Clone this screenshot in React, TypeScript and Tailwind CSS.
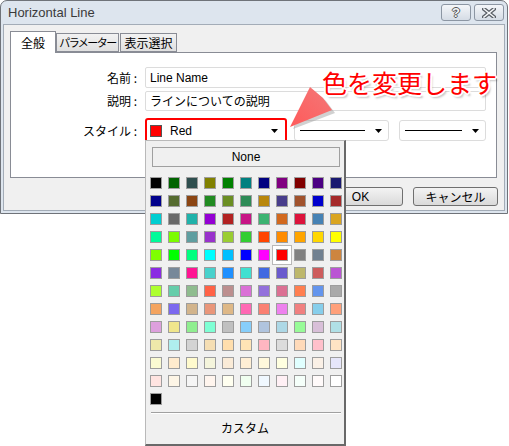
import React from "react";

const UI = "font-['Liberation_Sans','Noto_Sans_CJK_JP',sans-serif]";
const JP = "font-['Noto_Sans_CJK_JP','Liberation_Sans',sans-serif]";

// MT4 のウェブカラー (11 x 12)
const palette = [
  "#000000", "#006400", "#2f4f4f", "#808000", "#008000", "#008080", "#000080", "#800080", "#800000", "#4b0082", "#191970",
  "#00008b", "#556b2f", "#8b4513", "#228b22", "#6b8e23", "#2e8b57", "#b8860b", "#483d8b", "#a0522d", "#0000cd", "#a52a2a",
  "#00ced1", "#696969", "#20b2aa", "#9400d3", "#b22222", "#c71585", "#3cb371", "#d2691e", "#dc143c", "#4682b4", "#daa520",
  "#00fa9a", "#7cfc00", "#5f9ea0", "#9932cc", "#9acd32", "#32cd32", "#ff4500", "#ff8c00", "#ffa500", "#ffd700", "#ffff00",
  "#7fff00", "#00ff00", "#00ff7f", "#00ffff", "#00bfff", "#0000ff", "#ff00ff", "#ff0000", "#808080", "#708090", "#cd853f",
  "#8a2be2", "#778899", "#ff1493", "#48d1cc", "#1e90ff", "#40e0d0", "#4169e1", "#6a5acd", "#bdb76b", "#cd5c5c", "#ba55d3",
  "#adff2f", "#66cdaa", "#8fbc8f", "#ff6347", "#bc8f8f", "#da70d6", "#9370db", "#db7093", "#ff7f50", "#6495ed", "#a9a9a9",
  "#f4a460", "#7b68ee", "#d2b48c", "#e9967a", "#deb887", "#ff69b4", "#fa8072", "#ee82ee", "#f08080", "#87ceeb", "#ffa07a",
  "#dda0dd", "#f0e68c", "#90ee90", "#7fffd4", "#c0c0c0", "#87cefa", "#b0c4de", "#add8e6", "#98fb98", "#d8bfd8", "#b0e0e6",
  "#eee8aa", "#afeeee", "#d3d3d3", "#f5deb3", "#ffdead", "#ffe4b5", "#ffb6c1", "#dcdcdc", "#ffdab9", "#ffc0cb", "#ffe4c4",
  "#fafad2", "#ffebcd", "#fffacd", "#f5f5dc", "#faebd7", "#ffefd5", "#fff8dc", "#ffffe0", "#e0ffff", "#faf0e6", "#e6e6fa",
  "#ffe4e1", "#fdf5e6", "#f5f5f5", "#fff5ee", "#fffff0", "#f0fff0", "#f0f8ff", "#fff0f5", "#f5fffa", "#fffafa", "#ffffff",
  "#000000",
];

function DownArrow() {
  return (
    <svg width="7" height="4" viewBox="0 0 7 4" className="shrink-0">
      <polygon points="0,0 7,0 3.5,4" fill="#000" />
    </svg>
  );
}

function LineCombo({ width, lineW }: { width: number; lineW: number }) {
  return (
    <div
      className="h-[21px] bg-white border border-[#dcdcdc] rounded-[3px] flex items-center pl-[5px] pr-[6px] justify-between"
      style={{ width }}
    >
      <div className="h-px bg-black" style={{ width: lineW }} />
      <DownArrow />
    </div>
  );
}

function TitleButton({ kind }: { kind: "help" | "close" }) {
  return (
    <div className="w-[30px] h-[17px] rounded-[3px] border border-[#8c96a3] bg-gradient-to-b from-[#f4f6f9] to-[#d5dce5] flex items-center justify-center">
      {kind === "help" ? (
        <span className="text-[13px] font-bold leading-none text-[#f4f6f8] [text-shadow:1px_0_0_#555,-1px_0_0_#555,0_1px_0_#555,0_-1px_0_#555]">?</span>
      ) : (
        <svg width="14" height="10" viewBox="0 0 14 10">
          <path d="M2 1 L12 9 M12 1 L2 9" stroke="#5a5f66" strokeWidth="4" strokeLinecap="square" />
          <path d="M2 1 L12 9 M12 1 L2 9" stroke="#f4f6f8" strokeWidth="1.6" strokeLinecap="square" />
        </svg>
      )}
    </div>
  );
}

export default function App() {
  return (
    <div className={`relative w-[509px] h-[446px] bg-white overflow-hidden text-[12px] text-black ${UI}`}>
      {/* ダイアログ */}
      <div className="w-[508px] h-[214px] border border-[#6f7379] rounded-t-[7px] bg-[#dde5ee] px-[2px] pb-[2px] flex flex-col">
        <div className="h-[23px] flex items-center justify-between pl-[5px] pr-[1px]">
          <span className="text-[13px] text-[#3a3a3a] leading-none">Horizontal Line</span>
          <div className="flex gap-[3px]">
            <TitleButton kind="help" />
            <TitleButton kind="close" />
          </div>
        </div>
        <div className="flex-1 bg-[#f0f0f0] border border-[#a3acb7] pt-[6px] px-[6px] flex flex-col">
          {/* タブ */}
          <div className={`flex items-end h-[21px] whitespace-nowrap ${JP}`}>
            <div className="relative z-10 -mb-px h-[22px] w-[46px] bg-white border border-b-0 border-[#898c95] flex items-center justify-center">
              全般
            </div>
            <div className="h-[19px] w-[63px] bg-gradient-to-b from-[#f2f2f2] to-[#e0e0e0] border border-[#898c95] flex items-center justify-center text-[11px] tracking-[-1.5px]">
              パラメーター
            </div>
            <div className="ml-[1px] h-[19px] w-[57px] bg-gradient-to-b from-[#f2f2f2] to-[#e0e0e0] border border-[#898c95] flex items-center justify-center">
              表示選択
            </div>
          </div>
          {/* パネル */}
          <div className="w-[487px] h-[126px] bg-white border border-[#898c95] pt-[14px] flex flex-col">
            <div className="flex items-center h-[21px]">
              <span className={`w-[126px] text-right ${JP}`}>名前 :</span>
              <div className="ml-[8px] w-[341px] h-[21px] border border-[#dcdcdc] rounded-[2px] flex items-center pl-[4px]">Line Name</div>
            </div>
            <div className="flex items-center h-[20px] mt-[3px]">
              <span className={`w-[126px] text-right ${JP}`}>説明 :</span>
              <div className={`ml-[8px] w-[341px] h-[20px] border border-[#dcdcdc] rounded-[2px] flex items-center pl-[4px] ${JP}`}>
                ラインについての説明
              </div>
            </div>
            <div className="flex items-center h-[25px] mt-[7px]">
              <span className={`w-[126px] text-right ${JP}`}>スタイル :</span>
              <div className="ml-[8px] w-[142px] h-[25px] border-2 border-[#ff0000] rounded-[3px] bg-white flex items-center pl-[3px] pr-[7px]">
                <div className="w-[12px] h-[12px] bg-[#ff0000] border border-[#555]" />
                <span className="ml-[8px] flex-1">Red</span>
                <DownArrow />
              </div>
              <div className="ml-[7px]">
                <LineCombo width={95} lineW={65} />
              </div>
              <div className="ml-[10px]">
                <LineCombo width={87} lineW={57} />
              </div>
            </div>
          </div>
          {/* ボタン */}
          <div className="mt-[9px] flex justify-end gap-[10px]">
            <button className="w-[85px] h-[19px] rounded-[3px] border border-[#707070] bg-gradient-to-b from-[#f3f3f3] to-[#dadada] leading-none">
              OK
            </button>
            <button className={`w-[85px] h-[19px] rounded-[3px] border border-[#707070] bg-gradient-to-b from-[#f3f3f3] to-[#dadada] leading-none ${JP}`}>
              キャンセル
            </button>
          </div>
        </div>
      </div>

      {/* カラーパレット */}
      <div className="absolute left-[145px] top-[140px] w-[201px] h-[306px] bg-[#f0f0f0] border border-[#b9b9b9] border-r-[#696969] border-b-[#696969] border-r-2 border-b-2 flex flex-col">
        <div className="ml-[6px] mt-[6px] w-[188px] h-[20px] border border-[#a0a0a0] bg-[#f0f0f0] flex items-center justify-center">
          None
        </div>
        <div className="ml-[4px] mt-[10px] grid grid-cols-[repeat(11,12px)] gap-[6px]">
          {palette.map((c, i) => (
            <div
              key={i}
              className={`w-[12px] h-[12px] border border-[#9d9d9d] ${i === 51 ? "shadow-[0_0_0_3px_#fff,0_0_0_4px_#b8b8b8]" : ""}`}
              style={{ backgroundColor: c }}
            />
          ))}
        </div>
        <div className="ml-[5px] mt-[7px] w-[190px] h-px bg-[#a0a0a0] border-b border-white box-content" />
        <div className={`flex-1 flex items-center justify-center pb-[2px] ${JP}`}>カスタム</div>
      </div>

      {/* 吹き出し矢印 */}
      <svg className="absolute left-[280px] top-[80px]" width="60" height="55" viewBox="280 80 60 55">
        <defs>
          <linearGradient id="arr" x1="0" y1="1" x2="1" y2="0">
            <stop offset="0" stopColor="#ff5a5a" />
            <stop offset="1" stopColor="#f37878" />
          </linearGradient>
        </defs>
        <polygon points="293,129 313,90 326,101 335,113" fill="#9a9a9a" opacity="0.45" />
        <polygon points="290,127 310,87 323,98 332,110" fill="url(#arr)" />
      </svg>

      {/* 注釈 */}
      <div
        className={`absolute left-[322px] top-[70px] text-[25px] leading-none text-[#ff0000] ${JP} [text-shadow:2px_0_0_#fff,-2px_0_0_#fff,0_2px_0_#fff,0_-2px_0_#fff,1px_1px_0_#fff,-1px_-1px_0_#fff,1px_-1px_0_#fff,-1px_1px_0_#fff,2px_3px_2px_rgba(0,0,0,0.25)]`}
      >
        色を変更します
      </div>
    </div>
  );
}
